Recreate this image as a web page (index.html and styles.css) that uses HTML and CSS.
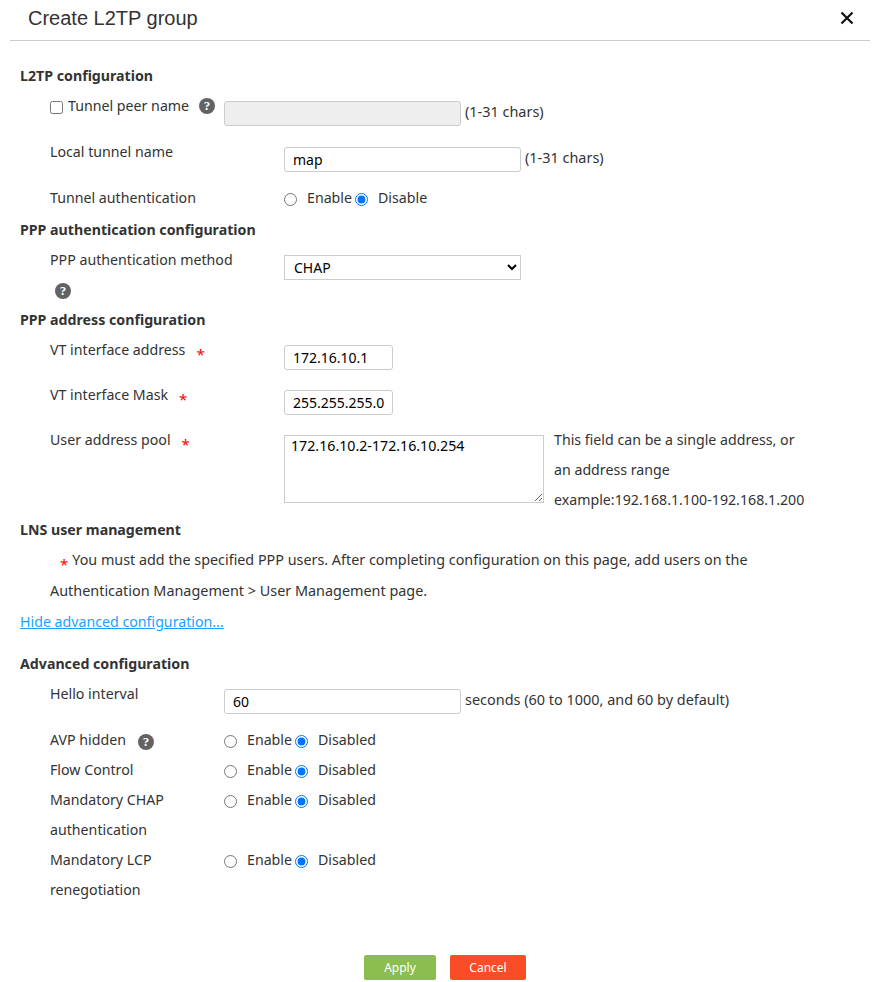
FILE: index.html
```html
<!DOCTYPE html>
<html lang="en">
<head>
<meta charset="utf-8">
<title>Create L2TP group</title>
<link rel="stylesheet" href="styles.css">
</head>
<body>
<header class="head">
  <h1 class="title">Create L2TP group</h1>
  <button class="close" type="button" aria-label="Close">
    <svg width="14" height="14" viewBox="0 0 14 14"><path d="M1.5 1.5l11 11M12.5 1.5l-11 11" stroke="#111" stroke-width="2.2" fill="none"/></svg>
  </button>
</header>
<form class="body">
  <h2 class="sec">L2TP configuration</h2>
  <div class="row gap">
    <label class="lab narrow"><input class="chk" type="checkbox"><span>Tunnel peer name</span><span class="help">?</span></label>
    <input class="txt wide" type="text" disabled>
    <span class="note">(1-31 chars)</span>
  </div>
  <div class="row gap">
    <span class="lab">Local tunnel name</span>
    <input class="txt wide" type="text" value="map">
    <span class="note">(1-31 chars)</span>
  </div>
  <div class="row">
    <span class="lab">Tunnel authentication</span>
    <span class="radios"><input type="radio" name="ta"><span class="opt">Enable</span><input type="radio" name="ta" checked><span class="opt2">Disable</span></span>
  </div>
  <h2 class="sec sec-t">PPP authentication configuration</h2>
  <div class="row">
    <div class="lab"><div>PPP authentication method</div><div class="help-line"><span class="help">?</span></div></div>
    <select class="txt wide sel"><option>CHAP</option></select>
  </div>
  <h2 class="sec">PPP address configuration</h2>
  <div class="row gap">
    <span class="lab">VT interface address<i class="req">*</i></span>
    <input class="txt small" type="text" value="172.16.10.1">
  </div>
  <div class="row gap">
    <span class="lab">VT interface Mask<i class="req">*</i></span>
    <input class="txt small" type="text" value="255.255.255.0">
  </div>
  <div class="row">
    <span class="lab">User address pool<i class="req">*</i></span>
    <textarea class="area">172.16.10.2-172.16.10.254</textarea>
    <p class="hint">This field can be a single address, or<br>an address range<br>example:192.168.1.100-192.168.1.200</p>
  </div>
  <h2 class="sec">LNS user management</h2>
  <p class="warn"><i class="req warn-req">*</i>You must add the specified PPP users. After completing configuration on this page, add users on the</p>
  <p class="warn-2">Authentication Management &gt; User Management page.</p>
  <a class="more" href="#">Hide advanced configuration...</a>
  <h2 class="sec sec-adv">Advanced configuration</h2>
  <div class="row gap">
    <span class="lab narrow">Hello interval</span>
    <input class="txt wide" type="text" value="60">
    <span class="note">seconds (60 to 1000, and 60 by default)</span>
  </div>
  <div class="row">
    <span class="lab narrow">AVP hidden<span class="help help-avp">?</span></span>
    <span class="radios"><input type="radio" name="a1"><span class="opt">Enable</span><input type="radio" name="a1" checked><span class="opt2">Disabled</span></span>
  </div>
  <div class="row">
    <span class="lab narrow">Flow Control</span>
    <span class="radios"><input type="radio" name="a2"><span class="opt">Enable</span><input type="radio" name="a2" checked><span class="opt2">Disabled</span></span>
  </div>
  <div class="row">
    <span class="lab narrow">Mandatory CHAP<br>authentication</span>
    <span class="radios"><input type="radio" name="a3"><span class="opt">Enable</span><input type="radio" name="a3" checked><span class="opt2">Disabled</span></span>
  </div>
  <div class="row">
    <span class="lab narrow">Mandatory LCP<br>renegotiation</span>
    <span class="radios"><input type="radio" name="a4"><span class="opt">Enable</span><input type="radio" name="a4" checked><span class="opt2">Disabled</span></span>
  </div>
  <div class="actions">
    <button class="btn apply" type="button">Apply</button>
    <button class="btn cancel" type="button">Cancel</button>
  </div>
</form>
</body>
</html>
```
FILE: styles.css
```css
* { box-sizing: border-box; }
html, body { margin: 0; padding: 0; background: #fff; }
body { width: 877px; height: 982px; overflow: hidden; font: 14.2px/30px "Noto Sans", sans-serif; color: #333; }
.head { display: flex; align-items: center; justify-content: space-between; height: 41px; margin: 0 7px 0 10px; padding: 0 16px 5px 18px; border-bottom: 1px solid #ccc; }
.title { margin: 0; font: 400 20px/30px "Liberation Sans", sans-serif; color: #333; }
.close { display: flex; padding: 0; border: 0; background: none; }
.body { padding: 20px 0 0 20px; }
.sec { margin: 0; font: 700 14.2px/30px "Noto Sans", sans-serif; color: #333; }
.sec-t { margin-top: 2px; }
.sec-adv { margin-top: 12px; }
.row { display: flex; align-items: flex-start; padding-left: 30px; }
.gap { padding-bottom: 10px; }
.lab { display: block; flex: none; width: 234px; }
.narrow { width: 174px; }
label.lab { display: flex; align-items: center; height: 30px; }
.chk { width: 13px; height: 13px; margin: 3px 5px 0 0; }
.help { display: inline-flex; align-items: center; justify-content: center; width: 16px; height: 16px; margin-left: 10px; border-radius: 50%; background: #636363; color: #fff; font: 700 13px/16px "Liberation Serif", serif; vertical-align: -2px; }
.help-line { display: flex; height: 30px; align-items: center; padding-top: 2px; margin-left: -5px; }
.help-avp { margin-left: 12px; vertical-align: -1px; }
.txt { display: block; flex: none; height: 25px; margin-top: 10px; padding: 0 0 0 8px; border: 1px solid #ccc; border-radius: 3px; background: #fff; color: #000; font: 14px "Noto Sans", sans-serif; }
.txt:disabled { background: #eee; }
.wide { width: 237px; }
.small { width: 109px; }
.sel { padding: 0 5px; border-radius: 0; }
.note { margin: 6px 0 0 4px; font-size: 14.45px; }
.radios { display: flex; align-items: center; height: 30px; }
.radios input { width: 13px; height: 13px; margin: 3px 0 0 0; }
.opt { margin: 0 3px 0 10px; }
.opt2 { margin-left: 10px; }
.req { display: inline-block; margin-left: 11px; color: #f00; font-style: normal; font-size: 15px; line-height: 16px; vertical-align: -5px; }
.area { display: block; flex: none; width: 260px; height: 68px; margin: 10px 0 0; padding: 0 6px; border: 1px solid #ccc; border-radius: 0; color: #000; font: 14.2px/19px "Noto Sans", sans-serif; }
.hint { margin: 0 0 0 10px; }
.warn { margin: 0; padding-left: 40px; font-size: 14.35px; }
.warn-req { margin: 0 4px 0 0; }
.warn-2 { margin: 1px 0 1px; padding-left: 30px; font-size: 14.4px; }
.more { display: block; color: #1e9fff; text-decoration: underline; }
.actions { display: flex; justify-content: center; gap: 14px; margin: 50px 0 0 -20px; padding-left: 13px; }
.btn { height: 25px; padding: 0; border: 0; border-radius: 2px; color: #fff; font: 12px "Noto Sans", sans-serif; }
.apply { width: 72px; background: #8bbd4f; }
.cancel { width: 76px; background: #f94d27; }
```
